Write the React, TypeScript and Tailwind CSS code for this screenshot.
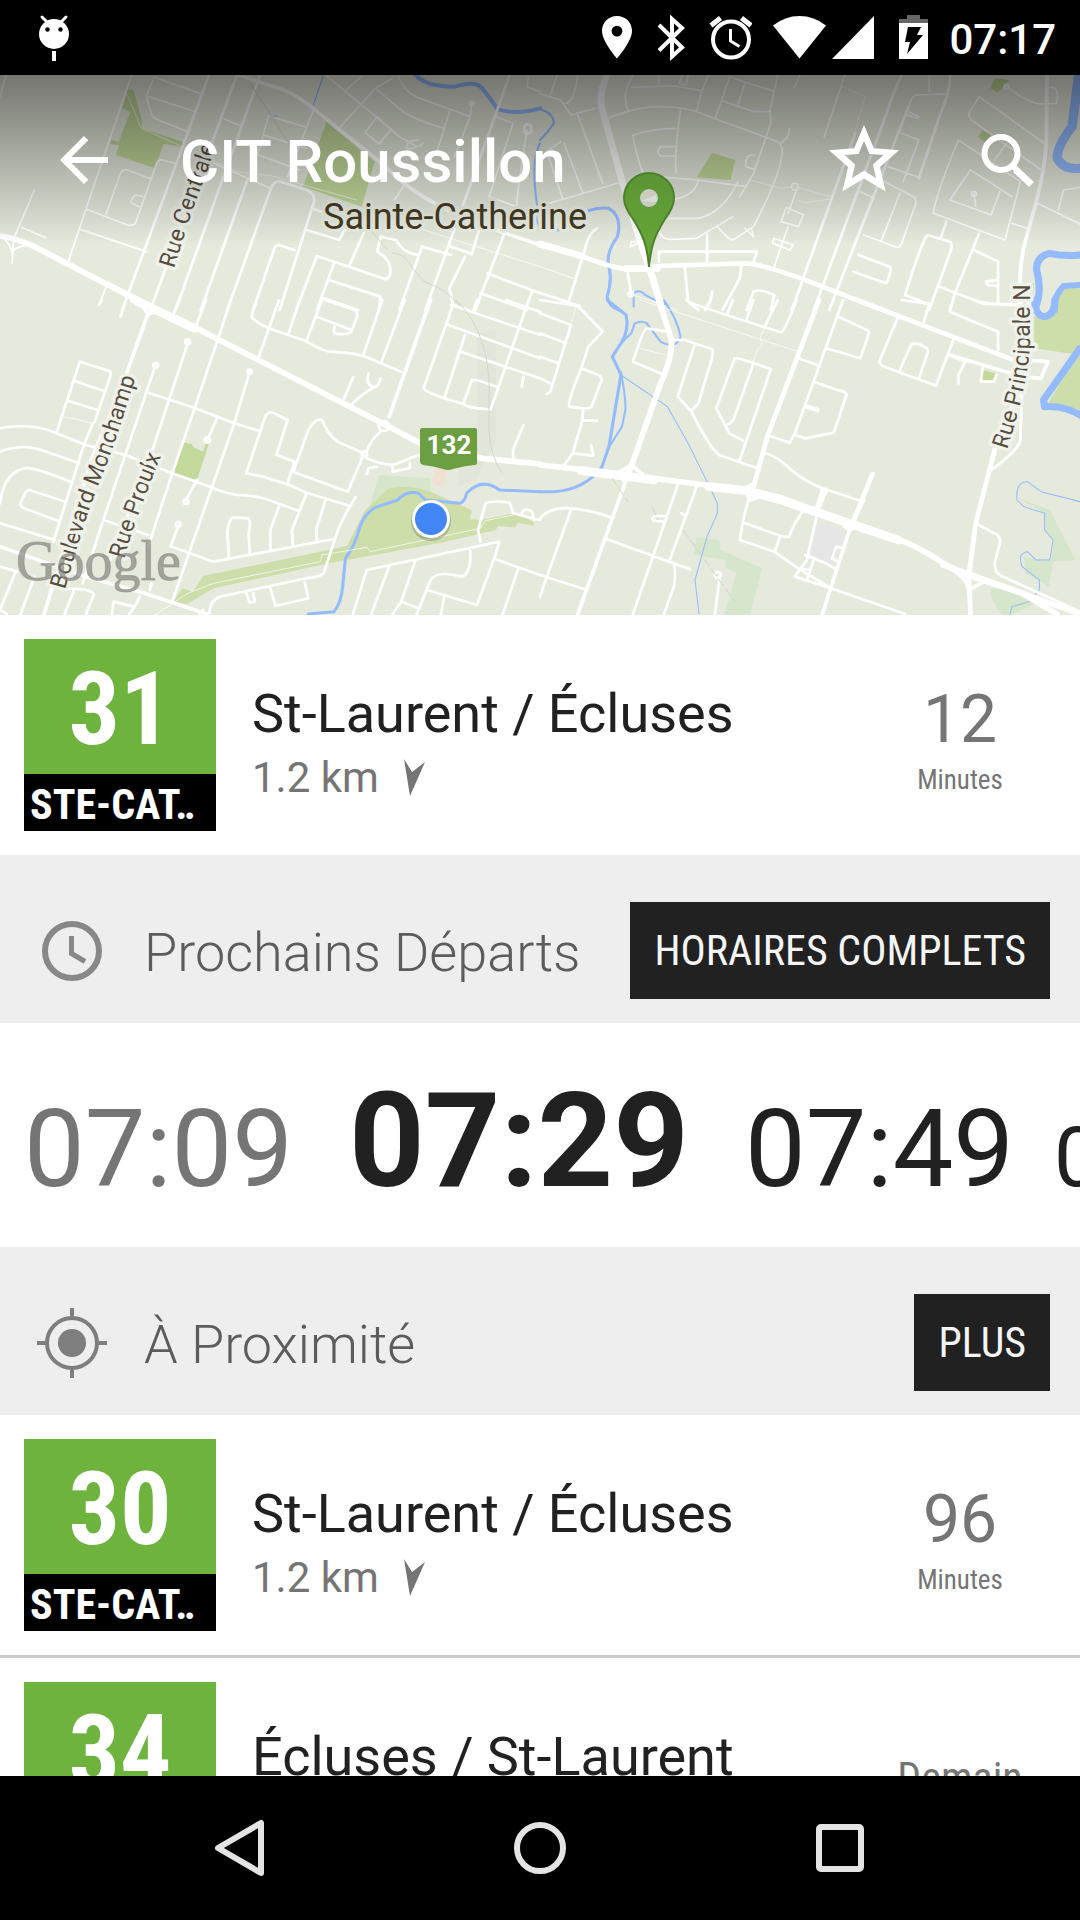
import type { ReactNode } from "react";

/* ---------- Map artwork: four quadrants, each drawn in its own grid ---------- */

type Road = { w: number; d: string };
type Area = { fill: string; d: string };
type Tile = { at: string; areas: Area[]; water: Road[]; roads: Road[] };

const PARK = "#cddeaa";
const LAWN = "#c3d99b";
const WOOD = "#d5e6cc";

const tiles: Tile[] = [
  {
    at: "translate(0 0) scale(0.3444 0.3333)",
    areas: [
      { fill: LAWN, d: "M372 268L388 270L412 360V385L530 425L528 440L475 432L450 505L337 465L345 435L320 432L322 420L345 425L378 335L355 325Z" },
      { fill: LAWN, d: "M948 365L1088 485L1050 620L880 560Z" },
    ],
    water: [
      { w: 4, d: "M1203 220Q1230 260 1320 260Q1380 240 1400 265Q1420 290 1445 328Q1500 345 1568 325" },
      { w: 1, d: "M938 228L910 315M805 348L780 352L750 460" },
      { w: 2, d: "M1568 430Q1540 480 1560 620Q1550 660 1568 680" },
    ],
    roads: [
      { w: 1, d: "M370 285L410 385L530 440L690 515L790 528L1035 600M1200 680L1568 800" },
      {
        w: 2,
        d: "M18 225L0 290M382 225L198 785M447 232L592 284M427 288L570 336M447 232L425 290L440 345Q445 355 460 360L545 395M640 352L700 378M510 490L470 480Q460 478 455 490L395 665Q390 680 370 675L250 627M440 537L370 510Q355 508 350 520L308 642M232 688L425 755M415 590L395 585Q385 590 380 605Q385 615 410 622M100 570L40 715L35 790M62 682L133 713M310 855L288 915M765 405L890 445M750 465L870 510M885 380L780 348L750 460M912 325L835 530M600 480L785 565M1050 230L1005 270M1140 235L1090 265L985 385M945 225L1080 340L1160 410L1210 440M1090 265L1170 335Q1230 370 1290 385M1155 225Q1170 270 1210 292L1365 350M1370 310L1365 350L1320 470M1305 335L1270 450M1095 350L1135 390L1100 432L1060 398ZM1175 555L1145 600M1215 420Q1180 420 1180 445Q1200 450 1230 430M1440 350L1490 370L1420 590L1500 620L1505 560L1530 390M1535 230L1530 260L1568 275",
      },
      {
        w: 3,
        d: "M607 225L355 930M688 225L440 920M755 225L510 930M718 540L583 930M660 930L785 570Q795 540 815 545L890 570Q915 580 912 605L812 930M855 750L810 735Q800 735 795 750L735 930M905 625L985 655M890 690L985 720L1000 690H1060L1015 795M860 930L920 768L1120 838Q1140 830 1130 790Q1120 770 1095 755L1105 710M970 790L920 930M955 840L1105 890L1100 930M940 895L1040 930M1105 710L1150 720Q1170 760 1215 765M1310 765L1225 740L1160 930M1310 740L1370 762L1400 660M1350 770L1305 865L1315 915L1360 930M1480 225L1350 600L1235 930M1465 700L1380 930M1415 820L1568 880M1395 880L1530 930M1545 875L1525 930",
      },
      { w: 4, d: "M690 225Q740 240 800 262Q850 275 910 325Q980 385 1060 450L1120 500Q1160 545 1200 570Q1240 600 1300 630L1440 690L1568 735" },
      { w: 6, d: "M0 708Q50 715 100 740L370 885L460 930M310 852L460 930" },
      { w: 2, d: "M35 755Q55 735 85 737M5 710Q30 730 36 760" },
      { w: 3, d: "M1523 387a10 10 0 1 0 18 0a10 10 0 1 0 -18 0M1365 310a5 5 0 1 0 10 0a5 5 0 1 0 -10 0" },
    ],
  },
  {
    at: "translate(540 0) scale(0.3444 0.3333)",
    areas: [
      { fill: LAWN, d: "M500 458L567 480L553 540L455 532Z" },
      { fill: LAWN, d: "M1320 235L1362 240L1330 278L1308 265Z" },
      { fill: LAWN, d: "M1285 390L1310 405L1290 425L1272 410Z" },
      { fill: PARK, d: "M1505 865H1568V930H1500Z" },
      { fill: LAWN, d: "M1400 850H1435V870H1400Z" },
    ],
    water: [
      { w: 2, d: "M0 328Q40 340 40 370Q20 400 0 420M272 920V880Q290 865 305 885Q340 905 355 905L375 925" },
      { w: 3, d: "M0 690Q90 700 110 650Q150 620 200 625Q240 650 225 710Q190 760 200 800Q210 840 195 890Q200 920 230 930" },
      { w: 9, d: "M1564 225L1545 380Q1500 440 1502 475Q1520 510 1568 505" },
      { w: 7, d: "M1568 765Q1520 770 1480 760Q1440 770 1442 810Q1460 880 1435 930" },
      { w: 6, d: "M1568 855L1520 858Q1490 890 1495 930" },
    ],
    roads: [
      { w: 1, d: "M875 258L945 290L912 400M610 540L700 565L740 560L845 590M750 600L770 608L840 598M0 800L105 838M270 885L400 930" },
      {
        w: 2,
        d: "M50 225L30 285M0 282L60 300L90 345L160 325M110 225Q100 310 70 312M110 345L182 550M20 455L65 595M60 425L20 455M70 430L125 580M20 612L225 550M270 225Q235 280 255 330M265 262L390 258L470 272L490 225M345 225V255M412 225L405 250L425 255L430 225M470 272L455 332M550 232L675 272M550 232L510 352M595 250L575 315M530 303L620 335H670M690 225L668 330L670 370L620 520L580 590M408 330Q390 460 395 520M395 385Q330 385 270 405Q270 430 300 525M395 440H350Q335 455 350 468H395M340 530L455 540L600 560M460 540Q450 600 340 605M575 545Q530 640 460 655H375M195 355Q270 325 330 320Q400 320 440 330L690 425Q710 440 700 480Q690 540 620 680L560 720Q550 722 515 680M340 680Q350 720 380 718L455 715L560 650M595 685L620 710L615 690M620 465Q595 460 598 500L620 508M725 385L720 410L700 430M755 225L740 260M885 225L825 410M1050 400L1100 420L1055 545M1010 500L1100 532M1000 545L1085 590Q1095 600 1090 615L1050 730Q1045 745 1035 742L940 705M930 575L970 595M1045 580L990 725M1070 335L1100 350L1095 355L1065 345M715 622L765 645L750 680L700 665ZM680 715L735 735L725 750L675 730ZM745 570L720 640M720 680L680 800M1130 225V275M1185 282L1090 285Q1080 290 1070 320",
      },
      {
        w: 2,
        d: "M1275 290L1465 430M1275 290L1245 340Q1245 355 1255 362L1455 510M1370 590L1250 510L1190 600L1310 645L1335 575M1260 580L1265 618M1395 545L1215 420Q1150 580 1142 640L1350 720L1395 545M1355 430L1320 480M1355 258Q1400 300 1450 312L1500 310Q1510 260 1480 262M1445 610L1568 672M1505 630L1520 570L1568 562M1370 670L1415 685M262 740L300 725L265 725Z",
      },
      {
        w: 3,
        d: "M915 400L740 905L730 930M1050 225Q1020 290 1010 330L820 860L795 930M1190 225Q1195 260 1160 350L1100 535M1070 320L870 850L840 930M925 765L1015 800Q1025 805 1005 850L910 815M1135 915L1060 885Q1110 720 1125 705L1190 725Q1200 735 1190 760L1130 930M1180 665L1165 710M1275 700L1205 880L1190 930M1260 750L1330 785V910M1160 860L1290 912H1400M1330 840L1295 845L1300 855L1328 858M345 785V755H630L620 785M485 700V785M420 795L430 905L460 930M585 795L580 835L530 930M600 930L620 875Q640 865 680 885L670 930M500 875L495 900L480 930M255 820L265 885M165 685Q140 700 130 750L85 900M0 878L115 918",
      },
      { w: 4, d: "M1472 225L1470 430Q1465 510 1440 610L1410 720Q1390 800 1395 870V930" },
      { w: 7, d: "M195 225Q165 290 185 345L240 550L290 720L320 810L355 930" },
      { w: 5, d: "M0 735L120 768Q200 800 250 808Q290 808 340 798L600 790Q650 795 765 838L1000 932" },
      { w: 7, d: "M0 732L120 768M250 806H340" },
      { w: 2, d: "M730 560a10 10 0 1 0 20 0a10 10 0 1 0 -20 0M1253 582a7 7 0 1 0 14 0a7 7 0 1 0 -14 0M1348 260a7 7 0 1 0 14 0a7 7 0 1 0 -14 0M256 883a8 8 0 1 0 16 0a8 8 0 1 0 -16 0" },
    ],
  },
  {
    at: "translate(0 300) scale(0.3444 0.3333)",
    areas: [
      { fill: LAWN, d: "M535 428L558 432L560 440L590 455L597 430L606 432L572 540L503 520Z" },
      { fill: "#e2e5da", d: "M1385 100L1440 90V420L1400 500L1380 540L1330 560V500L1385 380Z" },
      { fill: WOOD, d: "M1100 525L1250 535V575Q1180 550 1130 570L1075 615Z" },
      { fill: "#efe0d2", d: "M1265 505L1300 510L1285 562L1252 550Z" },
      { fill: PARK, d: "M1008 738L1060 630L1130 565Q1200 550 1260 580L1370 630L1365 658L1400 660L1490 640L1550 665V678L1505 668L1495 682L1445 678L1440 690L1280 728L955 790L620 865L545 912L503 905L530 865L560 875L590 828Z" },
    ],
    water: [{ w: 3, d: "M895 942L970 935Q990 910 995 860L1003 775Q1030 740 1045 680Q1060 640 1090 622L1155 600Q1180 570 1215 580L1235 600L1335 610Q1350 605 1355 580Q1400 530 1450 570L1568 575" }],
    roads: [
      { w: 1, d: "M450 945L545 880L620 850L930 785L935 765L1065 742L1075 755L1395 685L1410 662L1490 645M180 350L215 355L265 370" },
      {
        w: 3,
        d: "M270 370L245 430L155 725M450 200L300 660L240 850M545 130L430 490L320 780M670 0L632 120L565 325L500 520L430 740M725 215L680 370L500 905M598 0L570 75M520 0L505 40M630 355L602 420M572 540L540 600M517 680L495 740M430 278L560 322L680 370L755 393M365 465L500 520L610 560Q650 580 690 585Q740 585 780 600L865 632M300 660L430 705M500 740L620 785L965 718M0 670L160 720M0 800L50 815M0 385Q70 370 140 390L250 435L365 465M0 455Q60 430 120 450L230 490M0 610Q10 520 70 505Q100 500 210 548M190 605L85 570Q75 568 60 610Q58 620 70 625L170 663M165 395L232 185L315 212Q325 216 320 230L275 365M215 242L300 272M197 302L283 330M45 815L0 930M100 830L60 942M0 930L20 942M215 870L188 942M180 865L240 868Q275 875 272 885L250 942M325 942L330 905L390 920M405 890Q400 910 375 942M440 850L435 870M350 50L362 10M288 15L295 0",
      },
      {
        w: 3,
        d: "M745 0L730 50Q740 65 780 85L885 122Q940 155 960 155Q1040 160 1065 172L1165 215M1110 0L1055 165M1175 0L1108 185M935 0L890 122M870 0L838 100M810 0L750 175M945 0L1030 30Q1042 40 1035 55L1020 95Q1015 104 975 102Q965 95 972 80M920 50L1020 90M1025 232L995 305M1070 220Q1060 250 1085 262Q1100 260 1105 235M1085 262Q1040 290 1015 320M835 550L855 485L803 465L835 360L800 342Q780 330 770 350L715 520L765 530L840 555L890 578L1015 618M858 518L1010 575L1055 465M852 515L895 390Q920 350 935 360Q950 400 980 425L1055 460M1105 395Q1075 420 1065 455M1065 475Q1120 500 1150 492L1190 475L1220 465M1065 522L1070 505L1095 500M1140 495V515L1190 505V490M890 580L848 690L850 735M810 620L785 690V750M945 600L918 690L920 720M665 775L660 700Q665 650 680 652L720 655Q730 660 722 700L725 760M1032 592L1010 630L985 680L965 740L940 820Q930 830 890 835L640 890Q610 900 608 940M785 865L800 918L895 895L885 848M715 880L725 908L740 905L735 880M580 942L590 930",
      },
      {
        w: 3,
        d: "M1025 942L1065 810L1450 725L1440 760L1385 915L1240 870M1130 800L1078 942M1205 785L1165 905L1140 942M1165 905L1215 925M1210 942L1250 840Q1270 810 1340 830Q1370 820 1365 750M1290 890L1280 942M1440 778L1568 825M1505 805L1460 942M1395 725L1388 690L1410 610Q1430 600 1480 608L1490 640L1568 660M1515 640Q1520 620 1545 635L1550 660M1315 15L1230 265Q1235 275 1290 295L1345 312Q1360 325 1425 328L1535 0M1310 15L1568 105M1295 72L1568 175M1350 105L1290 295M1338 155L1568 235M1345 312L1370 240Q1380 235 1445 262M1385 0L1375 30M1470 0L1568 35M1520 230L1515 260M1520 375L1490 450V478",
      },
      { w: 4, d: "M430 40L350 270L265 480L200 700L128 942M1250 0L1130 350M0 740L250 830L420 880L600 942" },
      { w: 6, d: "M385 0L430 20L570 85L1110 370L1220 430L1400 475L1568 492" },
      { w: 9, d: "M400 5L565 85" },
      { w: 3, d: "M410 15L430 45L460 30M1100 378a15 15 0 1 0 30 0a15 15 0 1 0 -30 0M1050 462a8 8 0 1 0 16 0a8 8 0 1 0 -16 0M594 420a8 8 0 1 0 16 0a8 8 0 1 0 -16 0M719 215a6 6 0 1 0 12 0a6 6 0 1 0 -12 0M538 125a7 7 0 1 0 14 0a7 7 0 1 0 -14 0M445 196a7 7 0 1 0 14 0a7 7 0 1 0 -14 0M533 605a7 7 0 1 0 14 0a7 7 0 1 0 -14 0M510 673a7 7 0 1 0 14 0a7 7 0 1 0 -14 0" },
    ],
  },
  {
    at: "translate(540 300) scale(0.3444 0.3333)",
    areas: [
      { fill: "#e6e6e6", d: "M810 665L890 695L850 795L780 760Z" },
      { fill: WOOD, d: "M455 712L520 720L525 750L645 805L610 945H535L570 820L535 800L540 780L445 765Z" },
      { fill: WOOD, d: "M1380 590L1480 630L1555 780L1490 785L1478 860L1410 820L1405 770L1440 780L1485 775L1490 720L1465 690V640Z" },
      { fill: WOOD, d: "M1310 865L1390 870L1440 910L1370 945H1340L1310 890Z" },
      { fill: PARK, d: "M1500 0H1568V165L1435 145V50H1490Z" },
      { fill: PARK, d: "M1568 150V335L1475 310Z" },
      { fill: LAWN, d: "M1285 210L1322 220L1318 245L1280 242Z" },
    ],
    water: [
      { w: 3, d: "M195 0L250 45Q260 90 235 130L210 170L235 225L218 330L200 440L180 500Q130 570 40 575H0" },
      { w: 2, d: "M235 215Q250 300 248 330L238 380L195 450M360 0Q400 60 408 110Q395 150 350 125L310 70Q295 60 275 70L265 100L235 130" },
      { w: 1, d: "M235 225L370 320L430 430L485 545L515 610V640L485 710L450 840L462 942M1568 605L1455 575L1415 545Q1380 545 1385 600L1405 620L1465 640V690L1490 720L1480 780H1440L1415 755Q1385 760 1400 800L1450 840V870L1420 905L1370 920L1365 942" },
      { w: 7, d: "M1435 0Q1440 50 1465 50Q1495 45 1495 0M1568 145L1462 300L1465 320Q1520 315 1568 345" },
    ],
    roads: [
      { w: 1, d: "M290 0L750 155M655 75L640 110L645 135L630 150L620 185M290 145L365 165M105 20L90 75" },
      {
        w: 3,
        d: "M610 580L590 660L580 720L680 755L750 805L845 865L1060 942M1400 230L1395 420Q1390 450 1310 510M655 460Q690 470 730 510Q770 545 820 565L930 602M660 405L725 428L740 400L880 0M750 175L805 195M740 405L770 415L853 398L890 285Q890 275 870 272L795 245M830 145L930 175L955 100Q955 92 945 88L862 48M425 0Q430 10 700 97Q710 95 745 0M690 0L655 75M495 0L488 20M560 0L545 38M620 0L600 58M450 130L400 290L440 335Q490 440 520 465L628 503M385 120H420L500 148Q505 155 495 190L460 310L440 332M590 422L550 400L512 325L565 175Q575 170 670 208L580 480M540 375Q560 370 565 350L620 190M370 95L310 85Q300 85 270 185L350 220M0 40L90 75L30 275L20 282M0 100L72 128M0 170L50 188M0 235L30 250M0 0L110 18L182 95L140 140L120 205L170 225Q185 235 175 250L150 320Q145 330 85 320Q78 310 120 205M125 330L122 365L95 460L70 495M125 362H165M95 460L155 467L148 435",
      },
      {
        w: 3,
        d: "M0 655Q30 620 90 625Q150 630 205 652M90 630L20 830L0 890M195 718L435 808M0 825L130 868M400 555L270 942M455 560L375 785M390 795Q395 850 385 870L360 942M365 648H335Q320 655 330 662L360 665M410 640L420 645M522 830L508 942M595 670L700 708Q725 715 725 705L740 670L765 630M695 715L682 755M805 640L775 780L740 830L845 865M770 765L830 790L855 805M795 780L775 840M750 805L785 810M880 745L860 740L848 775L865 785M1040 50L985 185Q988 195 1000 200L1150 257L1200 120M1045 210L1075 140Q1085 120 1115 140Q1130 145 1125 160L1100 235M1190 165L1235 185L1215 225V250M1050 0L1130 12L1115 65M1200 0L1190 35L1330 95V150M1260 0Q1290 15 1400 15M1285 205L1280 245H1318L1325 225M1265 670L1320 700Q1340 710 1335 730L1320 790Q1320 820 1340 828L1568 935M820 565L800 630M507 825a9 9 0 1 0 18 0a9 9 0 1 0 -18 0",
      },
      { w: 4, d: "M250 540L110 942M940 600L905 670L820 942M1370 178L1475 185L1455 235L1400 230L1190 165" },
      { w: 5, d: "M920 0L1370 178M810 0L660 410L620 560M965 522L910 665M1420 0L1400 250L1320 450L1265 670L1245 830L1250 942M775 320L805 330M830 570L805 630" },
      { w: 6, d: "M345 0L382 120Q385 170 350 250L265 500L245 540M0 495L220 520L480 555L600 570L690 590L900 670L1040 718Q1100 740 1180 795L1240 825L1400 880L1500 942M1170 795L1240 820L1568 942" },
      { w: 9, d: "M120 512L330 540M490 560L600 572L700 600L1040 720" },
      { w: 4, d: "M225 520L265 495L300 525M595 565L625 550M600 580L610 600L650 585M1180 800Q1240 830 1245 870L1290 845M885 680L900 690L920 680M1430 900L1500 942" },
    ],
  },
];

const streets = [
  { id: "rue-centrale", d: "M174 269Q190 215 202 185T218 130" },
  { id: "boulevard-monchamp", d: "M65 590Q84 520 102 476T145 345" },
  { id: "rue-proulx", d: "M124 559Q136 515 172 430" },
  { id: "rue-principale", d: "M1007 450Q1031 375 1030 335V250" },
];

const streetNames: Record<string, string> = {
  "rue-centrale": "Rue Centrale",
  "boulevard-monchamp": "Boulevard Monchamp",
  "rue-proulx": "Rue Proulx",
  "rue-principale": "Rue Principale N",
};

function StreetMap() {
  return (
    <svg
      className="block aspect-[2/1] w-full font-['Roboto',sans-serif]"
      viewBox="0 75 1080 540"
      preserveAspectRatio="xMidYMid slice"
      role="img"
      aria-label="Sainte-Catherine"
    >
      <defs>
        <linearGradient id="pin" x1="0" y1="0" x2="0" y2="1">
          <stop offset="0" stopColor="#5b9434" />
          <stop offset="1" stopColor="#69ab3a" />
        </linearGradient>
        {streets.map((s) => (
          <path key={s.id} id={s.id} d={s.d} />
        ))}
      </defs>
      <rect y="75" width="1080" height="540" fill="#e6eadd" />
      {tiles.map((t) => (
        <g key={t.at} transform={t.at}>
          {t.areas.map((a) => (
            <path key={a.d} d={a.d} fill={a.fill} />
          ))}
        </g>
      ))}
      {tiles.map((t) => (
        <g key={t.at} transform={t.at} fill="none" strokeLinejoin="round" strokeLinecap="round">
          {t.water.map((r) => (
            <path key={r.d} d={r.d} stroke="#94bbff" strokeWidth={r.w * 3} />
          ))}
          {t.roads.map((r) => (
            <path key={r.d} d={r.d} stroke="#fff" strokeWidth={r.w * 3 - 1} />
          ))}
        </g>
      ))}
      <g fill="none" stroke="#d3d6c8">
        <path d="M250 83L290 145M372 232L388 250M392 253Q405 253 412 268L425 282Q445 288 460 306M456 300Q492 335 489 400V430Q490 455 502 473" />
        <path d="M612 478Q620 490 628 502M652 507L658 520M683 530L735 602" strokeDasharray="9 3" />
      </g>
      <path d="M420 430a2 2 0 0 1 2-2H475a2 2 0 0 1 2 2V463Q477 465 474 465Q464 466 453 469Q448 471 443 469Q433 466 423 465Q420 464 420 462Z" fill="#6b9f42" />
      <text x="449" y="454" textAnchor="middle" fontSize="26" fontWeight="700" fill="#fff">
        132
      </text>
      <g fill="#574d3e" stroke="#eff2ea" strokeWidth="7" strokeLinejoin="round" paintOrder="stroke">
        {streets.map((s) => (
          <text key={s.id} fontSize="23">
            <textPath href={`#${s.id}`}>{streetNames[s.id]}</textPath>
          </text>
        ))}
        <text x="323" y="229" fontSize="36" fill="#453b24" stroke="#eaeee2">
          Sainte-Catherine
        </text>
      </g>
      <text
        x="16"
        y="580"
        fontSize="56"
        fontFamily="Liberation Serif, serif"
        fill="#85857f"
        fillOpacity="0.7"
        stroke="#85857f"
        strokeOpacity="0.5"
        strokeWidth="1"
      >
        Google
      </text>
      <circle cx="431" cy="521" r="20" fill="#000" fillOpacity="0.18" />
      <circle cx="431" cy="519" r="19" fill="#fff" />
      <circle cx="431" cy="519" r="16" fill="#4285f4" />
    </svg>
  );
}

function MapPin() {
  return (
    <svg className="absolute top-24 left-[60%] h-[97px] w-14 -translate-x-[27px]" viewBox="0 0 56 97" aria-hidden="true">
      <path
        fillRule="evenodd"
        fill="url(#pin)"
        stroke="#4c802a"
        strokeWidth="2"
        d="M28 96C26 74 22 64 12 48C6 40 3 34 3 27A25 25 0 0 1 53 27C53 34 50 40 44 48C34 64 30 74 28 96Z"
      />
      <circle cx="28" cy="27" r="9" fill="#c9cdc0" />
      <path d="M20 30L35 24Q37 29 35 31Z" fill="#d9dbd6" />
    </svg>
  );
}

/* ---------- Status bar ---------- */

function StatusBar() {
  return (
    <div className="flex shrink-0 items-center justify-between bg-black pr-6 pl-9 text-white">
      <svg className="h-[75px] w-9" viewBox="36 0 36 75" fill="#fff" aria-hidden="true">
        <path d="M42 17L47 22M66 17L61 22" stroke="#fff" strokeWidth="3" strokeLinecap="round" />
        <circle cx="54" cy="34" r="15" />
        <circle cx="47.500" cy="29.500" r="2.200" fill="#000" />
        <circle cx="60.500" cy="29.500" r="2.200" fill="#000" />
        <path d="M52 51H56V61H52Z" />
      </svg>
      <div className="flex items-center gap-[18px]">
        <div className="flex items-center gap-5">
          <svg className="h-[75px] w-[35px]" viewBox="600 0 35 75" fill="#fff" aria-hidden="true">
            <path fillRule="evenodd" d="M617 16C608.500 16 602 22.500 602 31C602 41.500 617 58.500 617 58.500S632 41.500 632 31C632 22.500 625.500 16 617 16ZM617 36.500A5.400 5.400 0 1 1 617 25.700A5.400 5.400 0 0 1 617 36.500Z" />
          </svg>
          <svg className="h-[75px] w-8" viewBox="655 0 32 75" fill="none" stroke="#fff" strokeWidth="4" aria-hidden="true">
            <path d="M659 25L682 47.500L672 56.500V19L682 28L659 50.500" />
          </svg>
          <svg className="h-[75px] w-[45px]" viewBox="707 0 45 75" fill="none" stroke="#fff" strokeWidth="4" aria-hidden="true">
            <circle cx="731" cy="39.500" r="18" />
            <path d="M730.500 29V41L739.500 46.500" strokeWidth="3" />
            <path d="M711 25.500L720.500 18M741.500 18L751 25.500" strokeWidth="5" />
          </svg>
          <div className="flex">
            <svg className="h-[75px] w-[57px]" viewBox="772 0 57 75" fill="#fff" aria-hidden="true">
              <path d="M799.500 58.500L826 25.500Q814 16 799.500 16T773 25.500Z" />
            </svg>
            <svg className="h-[75px] w-[49px]" viewBox="829 0 49 75" fill="#fff" aria-hidden="true">
              <path d="M832 59H874V16Z" />
            </svg>
          </div>
          <svg className="h-[75px] w-[33px]" viewBox="898 0 33 75" aria-hidden="true">
            <path d="M907 15H920V19H928V23H899V19H907Z" fill="#666" />
            <path d="M899 23H928V59H899Z" fill="#fff" />
            <path d="M908 27H921L917 35H923L907 54L910 42H905Z" fill="#000" />
          </svg>
        </div>
        <time className="pt-1 font-['Roboto',sans-serif] text-[42px] leading-none font-medium">07:17</time>
      </div>
    </div>
  );
}

/* ---------- Action bar ---------- */

function ActionBar() {
  return (
    <header className="absolute inset-x-0 top-0 flex h-[170px] items-center bg-linear-to-b from-black/50 to-black/0 pr-8 pl-12 text-white">
      <button type="button" aria-label="Retour">
        <svg className="block size-[72px]" viewBox="0 0 24 24" fill="currentColor">
          <path d="M20 11H7.830l5.590-5.590L12 4l-8 8 8 8 1.410-1.410L7.830 13H20v-2z" />
        </svg>
      </button>
      <h1 className="ml-[60px] flex-1 pt-1 text-[60px] leading-none font-medium">CIT Roussillon</h1>
      <button type="button" aria-label="Favori">
        <svg className="block size-21" viewBox="0 0 24 24" fill="currentColor">
          <path d="M22 9.240l-7.190-.620L12 2 9.190 8.630 2 9.240l5.460 4.730L5.820 21 12 17.270 18.180 21l-1.630-7.030L22 9.240zM12 15.100l-3.460 2.090.92-3.940-3.060-2.650 4.030-.350L12 6.540l1.570 3.710 4.030.350-3.060 2.650.92 3.940L12 15.100z" />
        </svg>
      </button>
      <button type="button" aria-label="Rechercher" className="ml-[66px]">
        <svg className="block size-[76px]" viewBox="972 121 76 76" fill="none" stroke="currentColor">
          <circle cx="1001" cy="152.500" r="16.500" strokeWidth="6" />
          <path d="M1013 165L1018 170" strokeWidth="6" />
          <path d="M1015.500 168.500L1031.500 183.500" strokeWidth="7" />
        </svg>
      </button>
    </header>
  );
}

/* ---------- Routes ---------- */

function RouteRow({ number, name, children }: { number: string; name: string; children: ReactNode }) {
  return (
    <article className="flex shrink-0 items-center bg-white p-6">
      <div className="w-48 shrink-0 font-['Roboto_Condensed','Roboto',sans-serif] font-bold text-white">
        <div className="flex h-[135px] items-center justify-center bg-[#6fb33f] pt-1 text-[102px] leading-none">{number}</div>
        <div className="flex h-[57px] items-center bg-black px-1.5 pt-1 text-[42px] leading-none">STE-CAT‥</div>
      </div>
      <div className="ml-9 min-w-0 flex-1 pt-[22px]">
        <h2 className="truncate text-[54px] leading-[64px] text-[#212121]">{name}</h2>
        <p className="flex items-center gap-6 text-[42px] leading-[64px] text-[#757575]">
          1.2 km
          <svg className="h-10 w-6" viewBox="0 0 24 40" fill="currentColor" aria-hidden="true">
            <path d="M1 1L9 14L22 4L7 38Z" />
          </svg>
        </p>
      </div>
      <div className="flex w-48 flex-col items-center text-[#757575]">{children}</div>
    </article>
  );
}

function Minutes({ value }: { value: string }) {
  return (
    <>
      <span className="pt-[18px] text-[66px] leading-[72px]">{value}</span>
      <span className="font-['Roboto_Condensed','Roboto',sans-serif] text-[27px] leading-[48px]">Minutes</span>
    </>
  );
}

function SectionHeader({ icon, title, action }: { icon: ReactNode; title: string; action: string }) {
  return (
    <div className="flex shrink-0 items-center bg-[#eee] pt-[47px] pr-[30px] pb-6 pl-9">
      {icon}
      <h2 className="ml-9 flex-1 pt-1 text-[54px] leading-none font-light text-[#5c5c5c]">{title}</h2>
      <button
        type="button"
        className="h-[97px] bg-[#212121] px-6 font-['Roboto_Condensed','Roboto',sans-serif] text-[42px] leading-none text-[#f5f5f5]"
      >
        {action}
      </button>
    </div>
  );
}

const clockIcon = (
  <svg className="size-[72px]" viewBox="0 0 72 72" fill="none" stroke="#888" aria-hidden="true">
    <circle cx="36" cy="36" r="27" strokeWidth="6" />
    <path d="M35.500 21V38.500L49 46.500" strokeWidth="5" />
  </svg>
);

const nearbyIcon = (
  <svg className="size-[72px]" viewBox="0 0 72 72" fill="none" stroke="#7e7e7e" strokeWidth="4" aria-hidden="true">
    <circle cx="36" cy="36" r="25" />
    <circle cx="36" cy="36" r="14" fill="#7e7e7e" stroke="none" />
    <path d="M36 1V10M36 62V71M1 36H10M62 36H71" />
  </svg>
);

export default function App() {
  return (
    <div className="flex h-screen flex-col overflow-hidden bg-white font-['Roboto',sans-serif]">
      <StatusBar />
      <main className="flex min-h-0 flex-1 flex-col overflow-hidden">
        <section className="relative shrink-0 overflow-hidden">
          <StreetMap />
          <ActionBar />
          <MapPin />
        </section>

        <RouteRow number="31" name="St-Laurent / Écluses">
          <Minutes value="12" />
        </RouteRow>

        <SectionHeader icon={clockIcon} title="Prochains Départs" action="HORAIRES COMPLETS" />
        <div className="flex shrink-0 items-baseline overflow-hidden bg-white px-6 pt-10 pb-7 whitespace-nowrap text-[#212121]">
          <time className="text-[108px] leading-none text-[#757575]">07:09</time>
          <time className="ml-14 text-[132px] leading-[156px] font-bold">07:29</time>
          <time className="ml-14 text-[108px] leading-none">07:49</time>
          <time className="ml-10 text-[84px] leading-none">08:09</time>
        </div>

        <SectionHeader icon={nearbyIcon} title="À Proximité" action="PLUS" />
        <RouteRow number="30" name="St-Laurent / Écluses">
          <Minutes value="96" />
        </RouteRow>
        <hr className="h-[3px] shrink-0 border-0 bg-[#ccc]" />
        <RouteRow number="34" name="Écluses / St-Laurent">
          <span className="font-['Roboto_Condensed','Roboto',sans-serif] text-[42px] leading-[48px]">Demain</span>
        </RouteRow>
      </main>

      <nav className="grid h-36 shrink-0 grid-cols-3 items-center bg-black px-[90px] text-[#e4e4e4]">
        <button type="button" aria-label="Retour" className="flex justify-center">
          <svg className="size-[72px]" viewBox="0 0 72 72" fill="none" stroke="currentColor" strokeWidth="6" strokeLinejoin="round">
            <path d="M57 11V61L14 36Z" />
          </svg>
        </button>
        <button type="button" aria-label="Accueil" className="flex justify-center">
          <svg className="size-[72px]" viewBox="0 0 72 72" fill="none" stroke="currentColor" strokeWidth="6">
            <circle cx="36" cy="36" r="23" />
          </svg>
        </button>
        <button type="button" aria-label="Applications récentes" className="flex justify-center">
          <svg className="size-[72px]" viewBox="0 0 72 72" fill="none" stroke="currentColor" strokeWidth="6">
            <rect x="15" y="15" width="42" height="42" rx="2" />
          </svg>
        </button>
      </nav>
    </div>
  );
}
